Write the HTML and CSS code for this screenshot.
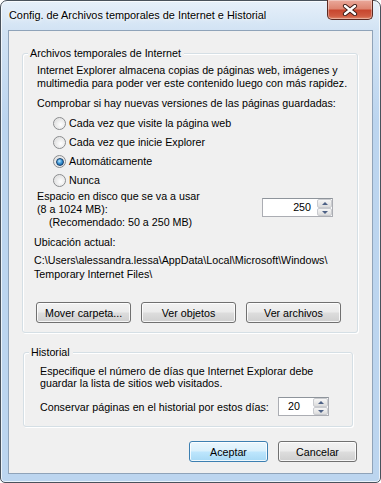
FILE: index.html
```html
<!DOCTYPE html>
<html lang="es">
<head>
    <meta charset="UTF-8" />
    <title>Config. de Archivos temporales de Internet e Historial</title>
    <link rel="stylesheet" href="styles.css">
</head>
<body>

    <!-- Dialog window -->
    <div class="window">
        <div class="titlebar">
            <span class="title">Config. de Archivos temporales de Internet e Historial</span>
            <button class="close" type="button" aria-label="Cerrar">
                <svg width="16" height="12" viewBox="0 0 16 12">
                    <path d="M3 2 L13 10 M13 2 L3 10" stroke="#3a1a14" stroke-width="4.2" stroke-linecap="round" />
                    <path d="M3 2 L13 10 M13 2 L3 10" stroke="#ffffff" stroke-width="2.4" stroke-linecap="round" />
                </svg>
            </button>
        </div>

        <div class="client">
            <!-- Temporary files group -->
            <div class="group group-files">
                <span class="legend">Archivos temporales de Internet</span>
                <p class="desc">Internet Explorer almacena copias de páginas web, imágenes y<br>multimedia para poder ver este contenido luego con más rapidez.</p>
                <p class="label">Comprobar si hay nuevas versiones de las páginas guardadas:</p>
                <ul class="radios">
                    <li><span class="radio"></span>Cada vez que visite la página web</li>
                    <li><span class="radio"></span>Cada vez que inicie Explorer</li>
                    <li><span class="radio checked"></span>Automáticamente</li>
                    <li><span class="radio"></span>Nunca</li>
                </ul>
                <div class="disk-row">
                    <div class="disk-text">
                        Espacio en disco que se va a usar<br>
                        (8 a 1024 MB):<br>
                        <span class="indent">(Recomendado: 50 a 250 MB)</span>
                    </div>
                    <div class="spin spin-disk">
                        <span class="spin-value">250</span>
                        <span class="spin-btns"><span class="up"></span><span class="down"></span></span>
                    </div>
                </div>
                <p class="loc-label">Ubicación actual:</p>
                <p class="loc-path">C:\Users\alessandra.lessa\AppData\Local\Microsoft\Windows\<br>Temporary Internet Files\</p>
                <div class="btn-row">
                    <button class="btn wide" type="button">Mover carpeta...</button>
                    <button class="btn wide" type="button">Ver objetos</button>
                    <button class="btn wide" type="button">Ver archivos</button>
                </div>
            </div>

            <!-- History group -->
            <div class="group group-history">
                <span class="legend">Historial</span>
                <p class="desc-hist">Especifique el número de días que Internet Explorar debe<br>guardar la lista de sitios web visitados.</p>
                <div class="days-row">
                    <span>Conservar páginas en el historial por estos días:</span>
                    <div class="spin spin-days">
                        <span class="spin-value">20</span>
                        <span class="spin-btns"><span class="up"></span><span class="down"></span></span>
                    </div>
                </div>
            </div>

            <div class="footer">
                <button class="btn default" type="button">Aceptar</button>
                <button class="btn" type="button">Cancelar</button>
            </div>
        </div>
    </div>

</body>
</html>
```

FILE: styles.css
```css
/* --- Page --- */
body {
    margin: 0;
    padding: 0;
    background: #ffffff;
    font-family: "Liberation Sans", Arial, sans-serif;
    font-size: 10.7px;
    color: #000000;
    white-space: nowrap;
}

p {
    margin: 0;
}

/* --- Window frame --- */
.window {
    position: relative;
    width: 381px;
    height: 483px;
    box-sizing: border-box;
    display: flex;
    flex-direction: column;
    padding: 0 7px 8px 7px;
    border: 1px solid #49525c;
    border-radius: 7px 7px 5px 5px;
    background: linear-gradient(to bottom, #e6f0fa 0, #d2e3f4 29px, #bcd5ef 120px, #bcd5ef 100%);
    box-shadow: inset 0 0 0 1px rgba(255, 255, 255, 0.7);
}

.titlebar {
    height: 29px;
    display: flex;
    align-items: center;
    padding-left: 1px;
}

.title {
    font-size: 10.9px;
    text-shadow: 0 0 6px #ffffff, 0 0 3px #ffffff;
    margin-top: -1px;
}

.close {
    position: absolute;
    top: -1px;
    right: 7px;
    width: 46px;
    height: 20px;
    padding: 0;
    display: flex;
    align-items: center;
    justify-content: center;
    border: 1px solid #5b2a22;
    border-top: none;
    border-radius: 0 0 5px 5px;
    background: linear-gradient(to bottom, #eaa99b 0, #de8672 45%, #c8472f 55%, #d05c42 85%, #e08a6c 100%);
    box-shadow: inset 0 0 0 1px rgba(255, 255, 255, 0.35);
}

.close svg {
    display: block;
}

/* --- Client area --- */
.client {
    flex: 1;
    display: flex;
    flex-direction: column;
    border: 1px solid #8fa3b9;
    background: #f0f0f0;
}

/* --- Group boxes --- */
.group {
    position: relative;
    border: 1px solid #d5dfe5;
    border-radius: 3px;
    box-shadow: inset 1px 1px 0 #ffffff, 1px 1px 0 #ffffff;
}

.legend {
    position: absolute;
    top: -8px;
    left: 5px;
    padding: 0 3px 0 2px;
    background: #f0f0f0;
    line-height: 14px;
}

.group-files {
    margin: 22px 14px 0 13px;
    padding: 10px 24px 9px 14px;
    line-height: 13px;
}

.label {
    margin-top: 7px;
}

.radios {
    list-style: none;
    margin: 4px 0 0 0;
    padding: 0 0 0 16px;
}

.radios li {
    height: 19px;
    display: flex;
    align-items: center;
}

.radio {
    width: 11px;
    height: 11px;
    margin-right: 3px;
    border: 1px solid #8a8c8e;
    border-radius: 50%;
    background: radial-gradient(circle at 60% 60%, #ffffff 0, #f2f2f2 30%, #d4d4d4 100%);
    box-shadow: inset 0 0 1px #ffffff;
    display: flex;
    align-items: center;
    justify-content: center;
}

.radio.checked::after {
    content: "";
    width: 6px;
    height: 6px;
    border-radius: 50%;
    background: radial-gradient(circle at 40% 35%, #bfe8ff 0, #3c97d7 45%, #0d4f92 100%);
    border: 0.5px solid #163e6a;
}

.disk-row {
    display: flex;
    justify-content: space-between;
    align-items: flex-start;
}

.indent {
    padding-left: 12px;
}

.loc-label {
    margin-top: 7px;
    margin-left: -3px;
}

.loc-path {
    margin-top: 4px;
    margin-left: -3px;
    line-height: 14px;
}

.btn-row {
    display: flex;
    gap: 10px;
    margin: 21px -12px 0 -1px;
}

/* --- Spin boxes --- */
.spin {
    display: flex;
    height: 19px;
    box-sizing: border-box;
    border: 1px solid #abadb3;
    border-top-color: #8e949b;
    background: #ffffff;
}

.spin-value {
    flex: 1;
    line-height: 17px;
}

.spin-disk {
    width: 71px;
    margin-top: 8px;
}

.spin-disk .spin-value {
    text-align: right;
    padding-right: 6px;
}

.spin-days {
    width: 51px;
}

.spin-days .spin-value {
    padding-left: 9px;
}

.spin-btns {
    width: 15px;
    display: flex;
    flex-direction: column;
    background: #ffffff;
}

.spin-btns span {
    flex: 1;
    box-sizing: border-box;
    border: 1px solid #c9cbcf;
    border-radius: 2px;
    background: linear-gradient(to bottom, #f6f6f6, #dcdcdc);
    position: relative;
}

.spin-btns .up::after,
.spin-btns .down::after {
    content: "";
    position: absolute;
    left: 4px;
    border-left: 3px solid transparent;
    border-right: 3px solid transparent;
}

.spin-btns .up::after {
    top: 2px;
    border-bottom: 3px solid #4d6185;
}

.spin-btns .down::after {
    top: 2px;
    border-top: 3px solid #4d6185;
}

/* --- History group --- */
.group-history {
    margin: 19px 19px 0 14px;
    padding: 12px 10px 10px 16px;
}

.desc-hist {
    line-height: 12px;
}

.days-row {
    display: flex;
    align-items: center;
    justify-content: space-between;
    margin-top: 8px;
    padding-right: 13px;
}

/* --- Buttons --- */
.btn {
    height: 21px;
    min-width: 79px;
    padding: 0 8px;
    font-family: "Liberation Sans", Arial, sans-serif;
    font-size: 10.7px;
    color: #000000;
    border: 1px solid #707070;
    border-radius: 3px;
    background: linear-gradient(to bottom, #f2f2f2 0, #ebebeb 48%, #dddddd 52%, #cfcfcf 100%);
    box-shadow: inset 0 0 0 1px rgba(255, 255, 255, 0.8);
    cursor: pointer;
}

.btn.wide {
    width: 95px;
    flex-shrink: 0;
}

.btn.default {
    border-color: #3c7fb1;
    background: linear-gradient(to bottom, #eaf6fd 0, #d9f0fc 48%, #bee6fd 52%, #a7d9f5 100%);
}

.footer {
    display: flex;
    justify-content: flex-end;
    gap: 10px;
    margin-top: auto;
    padding: 0 15px 11px 0;
}
```
